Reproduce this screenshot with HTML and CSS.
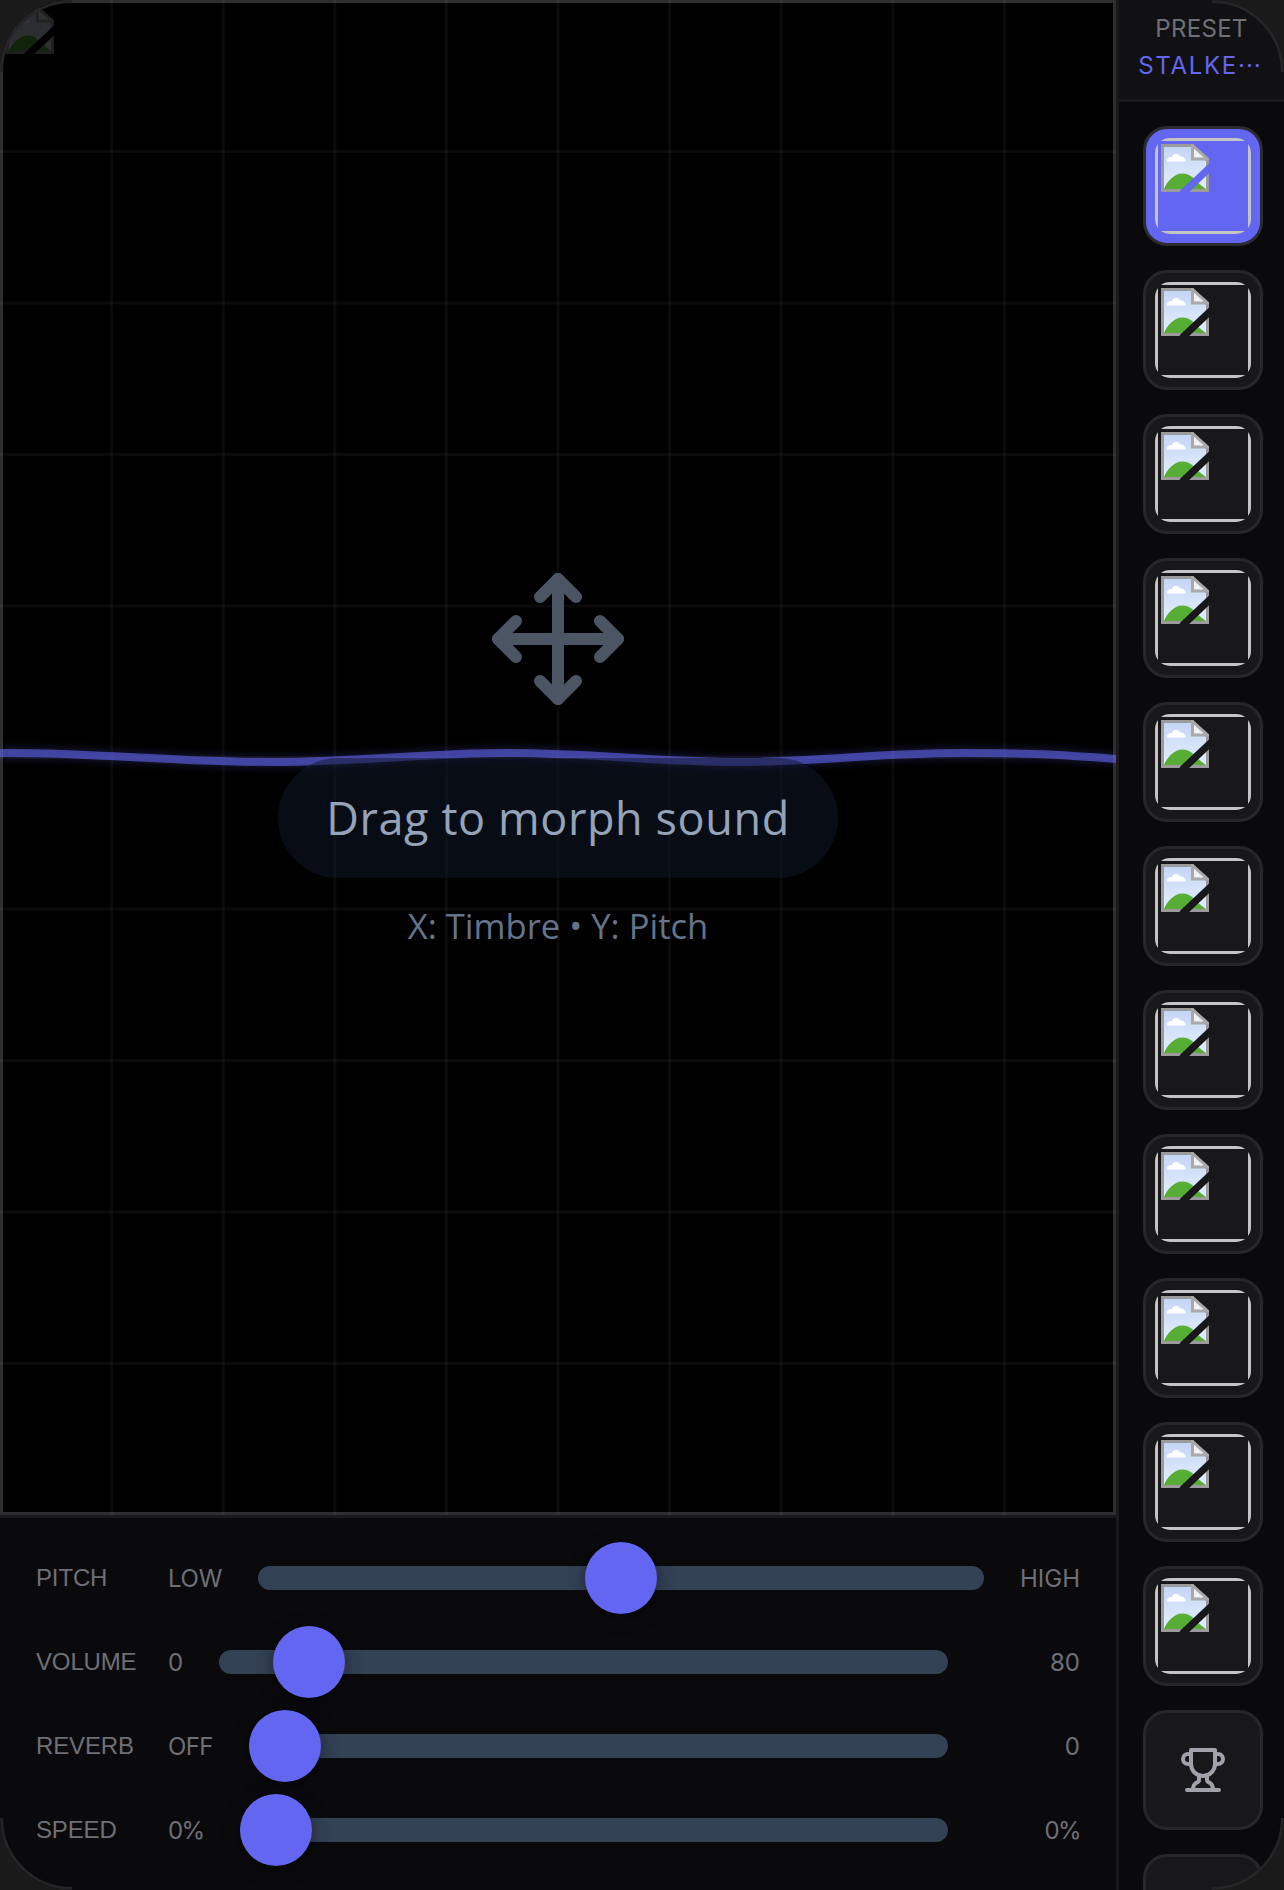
FILE: index.html
```html
<!DOCTYPE html>
<html lang="en">
<head>
<meta charset="utf-8">
<title>Morph</title>
<link rel="stylesheet" href="styles.css">
</head>
<body>
<svg class="defs" width="0" height="0" aria-hidden="true">
  <defs>
    <linearGradient id="sky" x1="0" y1="0" x2="0" y2="1">
      <stop offset="0" stop-color="#c3d6f6"/>
      <stop offset="1" stop-color="#e6eefb"/>
    </linearGradient>
    <symbol id="broken" viewBox="0 0 16 16">
      <path d="M.5.5H10.5L15.5 5.5V15.5H.5Z" fill="url(#sky)" stroke="#9b9b9b"/>
      <path d="M2 5.6C2 4.6 3 4.2 3.6 4.4C4 3 5.8 2.8 6.4 4.2C7.4 4 8.2 4.8 8.2 5.8H2Z" fill="#fff"/>
      <path d="M1 15C2 12.4 4.4 9.8 7.2 9.8C9.8 9.8 11.5 12 13 13.5L15 15Z" fill="#58ad35"/>
      <path d="M10.5.5V5H15.5Z" fill="#f2f2f2" stroke="#a8a8a8"/>
      <path class="tear" d="M17 7.2L7 16.6"/>
    </symbol>
  </defs>
</svg>
<div class="device">
  <main class="main">
    <section class="stage">
      <svg class="grid" width="1116" height="1515" viewBox="0 0 1116 1515" aria-hidden="true">
        <path d="M111.6 0V1515M223.2 0V1515M334.8 0V1515M446.4 0V1515M558 0V1515M669.6 0V1515M781.2 0V1515M892.8 0V1515M1004.4 0V1515"/>
        <path d="M0 151.5H1116M0 303H1116M0 454.5H1116M0 606H1116M0 757.5H1116M0 909H1116M0 1060.5H1116M0 1212H1116M0 1363.5H1116"/>
      </svg>
      <svg class="wave" width="1116" height="1515" viewBox="0 0 1116 1515" aria-hidden="true">
        <path d="M0 753C90 752 170 762 270 762S420 753 509 753S650 762 738 762S870 753 963 753S1070 756 1116 759"/>
      </svg>
      <svg class="ghost" width="48" height="48" aria-hidden="true"><use href="#broken"/></svg>
      <div class="hint">
        <svg class="move" width="144" height="144" viewBox="0 0 24 24" aria-hidden="true">
          <polyline points="5 9 2 12 5 15"/><polyline points="9 5 12 2 15 5"/><polyline points="15 19 12 22 9 19"/><polyline points="19 9 22 12 19 15"/><line x1="2" y1="12" x2="22" y2="12"/><line x1="12" y1="2" x2="12" y2="22"/>
        </svg>
        <div class="pill">Drag to morph sound</div>
        <div class="axes">X: Timbre • Y: Pitch</div>
      </div>
    </section>
    <section class="panel">
      <div class="row">
        <span class="label">PITCH</span><span class="val">LOW</span>
        <div class="track"><span class="thumb" style="--v:.5"></span></div>
        <span class="val end">HIGH</span>
      </div>
      <div class="row">
        <span class="label">VOLUME</span><span class="val">0</span>
        <div class="track"><span class="thumb" style="--v:.082"></span></div>
        <span class="val end num">80</span>
      </div>
      <div class="row">
        <span class="label">REVERB</span><span class="val off">OFF</span>
        <div class="track"><span class="thumb" style="--v:0"></span></div>
        <span class="val end num">0</span>
      </div>
      <div class="row">
        <span class="label">SPEED</span><span class="val pct">0%</span>
        <div class="track"><span class="thumb" style="--v:0"></span></div>
        <span class="val end num pct">0%</span>
      </div>
    </section>
  </main>
  <aside class="side">
    <header class="side-head">
      <div class="side-title">PRESET</div>
      <div class="side-name">STALKE<span class="dots">···</span></div>
    </header>
    <div class="list">
      <button class="item active"><span class="frame"><span class="frame-in"><svg width="48" height="48" aria-hidden="true"><use href="#broken"/></svg></span></span></button>
      <button class="item"><span class="frame"><span class="frame-in"><svg width="48" height="48" aria-hidden="true"><use href="#broken"/></svg></span></span></button>
      <button class="item"><span class="frame"><span class="frame-in"><svg width="48" height="48" aria-hidden="true"><use href="#broken"/></svg></span></span></button>
      <button class="item"><span class="frame"><span class="frame-in"><svg width="48" height="48" aria-hidden="true"><use href="#broken"/></svg></span></span></button>
      <button class="item"><span class="frame"><span class="frame-in"><svg width="48" height="48" aria-hidden="true"><use href="#broken"/></svg></span></span></button>
      <button class="item"><span class="frame"><span class="frame-in"><svg width="48" height="48" aria-hidden="true"><use href="#broken"/></svg></span></span></button>
      <button class="item"><span class="frame"><span class="frame-in"><svg width="48" height="48" aria-hidden="true"><use href="#broken"/></svg></span></span></button>
      <button class="item"><span class="frame"><span class="frame-in"><svg width="48" height="48" aria-hidden="true"><use href="#broken"/></svg></span></span></button>
      <button class="item"><span class="frame"><span class="frame-in"><svg width="48" height="48" aria-hidden="true"><use href="#broken"/></svg></span></span></button>
      <button class="item"><span class="frame"><span class="frame-in"><svg width="48" height="48" aria-hidden="true"><use href="#broken"/></svg></span></span></button>
      <button class="item"><span class="frame"><span class="frame-in"><svg width="48" height="48" aria-hidden="true"><use href="#broken"/></svg></span></span></button>
      <button class="item">
        <svg class="trophy" width="48" height="48" viewBox="0 0 24 24" aria-hidden="true">
          <path d="M6 9H4.5a2.5 2.5 0 0 1 0-5H6"/><path d="M18 9h1.5a2.5 2.5 0 0 0 0-5H18"/><path d="M4 22h16"/><path d="M10 14.66V17c0 .55-.47.98-.97 1.21C7.85 18.75 7 20.24 7 22"/><path d="M14 14.66V17c0 .55.47.98.97 1.21C16.15 18.75 17 20.24 17 22"/><path d="M18 2H6v7a6 6 0 0 0 12 0V2Z"/>
        </svg>
      </button>
      <button class="item"></button>
    </div>
  </aside>
  <div class="bezel"></div>
</div>
</body>
</html>
```
FILE: styles.css
```css
* { box-sizing: border-box; }
html, body { margin: 0; padding: 0; background: #1a1a1a; }
body { font-family: Inter, "Liberation Sans", sans-serif; }
.defs { position: absolute; }

.device {
  position: relative;
  display: flex;
  width: 1284px;
  height: 1890px;
  overflow: hidden;
  background: #0a0a0c;
}
.bezel {
  position: absolute;
  inset: 0;
  border-radius: 72px;
  box-shadow: 0 0 0 80px #1a1a1a;
  pointer-events: none;
}
.bezel::after {
  content: "";
  position: absolute;
  inset: 0;
  border: 3px solid #252527;
  border-radius: 72px;
  -webkit-mask:
    linear-gradient(#000 0 0) left top / 72px 72px no-repeat,
    linear-gradient(#000 0 0) right top / 72px 72px no-repeat,
    linear-gradient(#000 0 0) left bottom / 72px 72px no-repeat,
    linear-gradient(#000 0 0) right bottom / 72px 72px no-repeat;
  mask:
    linear-gradient(#000 0 0) left top / 72px 72px no-repeat,
    linear-gradient(#000 0 0) right top / 72px 72px no-repeat,
    linear-gradient(#000 0 0) left bottom / 72px 72px no-repeat,
    linear-gradient(#000 0 0) right bottom / 72px 72px no-repeat;
}

.main { width: 1116px; flex: none; display: flex; flex-direction: column; }

.stage {
  position: relative;
  height: 1515px;
  flex: none;
  border: 3px solid #2e2e2e;
  background: #000;
  display: flex;
  align-items: center;
  justify-content: center;
}
.grid, .wave { position: absolute; left: -3px; top: -3px; }
.grid path { fill: none; stroke: rgba(255, 255, 255, .04); stroke-width: 3; }
.wave path {
  fill: none;
  stroke: rgba(99, 102, 241, .6);
  stroke-width: 8;
  filter: drop-shadow(0 0 5px rgba(99, 102, 241, .5));
}
.ghost { position: absolute; left: 3px; top: 3px; opacity: .2; --tear: #000; }

.hint { position: relative; display: flex; flex-direction: column; align-items: center; padding-top: 2px; }
.move { fill: none; stroke: #4b5563; stroke-width: 2; stroke-linecap: round; stroke-linejoin: round; margin-bottom: 47px; }
.pill {
  height: 120px;
  padding: 0 48px;
  border-radius: 60px;
  background: rgba(15, 23, 42, .5);
  color: #94a3b8;
  font-family: "Open Sans", sans-serif;
  font-size: 45px;
  line-height: 120px;
  letter-spacing: .6px;
  white-space: nowrap;
}
.axes {
  margin-top: 24px;
  color: #64748b;
  font-family: "Open Sans", sans-serif;
  font-size: 34.6px;
  line-height: 48px;
  white-space: nowrap;
}

.panel {
  flex: 1;
  border-top: 3px solid #1a1a1c;
  padding: 24px 36px;
  display: flex;
  flex-direction: column;
  gap: 12px;
  background: #0a0a0c;
}
.row { display: flex; align-items: center; gap: 36px; height: 72px; flex: none; }
.label, .val { color: #6f6f76; font-size: 24px; white-space: nowrap; }
.label { width: 96px; flex: none; font-family: "Liberation Sans", sans-serif; letter-spacing: -.15px; }
.val { flex: none; letter-spacing: -.3px; }
.val.end { letter-spacing: 0; }
.val.off { letter-spacing: -.6px; }
.val.pct { letter-spacing: -1.6px; }
.end { text-align: right; }
.num { width: 96px; }
.track { position: relative; flex: 1; height: 24px; border-radius: 12px; background: #334155; }
.thumb {
  position: absolute;
  top: -24px;
  left: calc((100% - 72px) * var(--v));
  width: 72px;
  height: 72px;
  border-radius: 50%;
  background: #6366f1;
  box-shadow: 0 3px 18px rgba(0, 0, 0, .4);
}

.side {
  width: 168px;
  flex: none;
  border-left: 3px solid #1a1a1c;
  background: #0a0a0c;
  display: flex;
  flex-direction: column;
  overflow: hidden;
}
.side-head {
  height: 102px;
  flex: none;
  border-bottom: 3px solid #1a1a1c;
  background: #111113;
  padding: 14px 0 0;
  text-align: center;
}
.side-title { color: #6f6f76; font-size: 24px; line-height: 30px; letter-spacing: .3px; }
.side-name {
  margin-top: 7px;
  padding-right: 3px;
  color: #6366f1;
  font-size: 24px;
  line-height: 30px;
  letter-spacing: 1.7px;
  white-space: nowrap;
}
.dots { letter-spacing: 1px; }
.list { padding: 24px 21px 0 24px; display: flex; flex-direction: column; gap: 24px; }
.item {
  width: 120px;
  height: 120px;
  flex: none;
  padding: 0;
  border: 3px solid #27272a;
  border-radius: 24px;
  background: #18181b;
  display: flex;
  align-items: center;
  justify-content: center;
  --tear: #18181b;
}
.item.active { background: #6366f1; border-color: #2b2b30; --tear: #6366f1; }
.frame { width: 96px; height: 96px; border-radius: 15px; overflow: hidden; display: block; }
.frame-in { display: block; width: 96px; height: 96px; border: 3px solid #c4c4c4; padding: 3px; }
.frame-in svg { display: block; }
.tear { fill: none; stroke: var(--tear); stroke-width: 2.4; }
.trophy { fill: none; stroke: #a1a1aa; stroke-width: 2; stroke-linecap: round; stroke-linejoin: round; }
```
